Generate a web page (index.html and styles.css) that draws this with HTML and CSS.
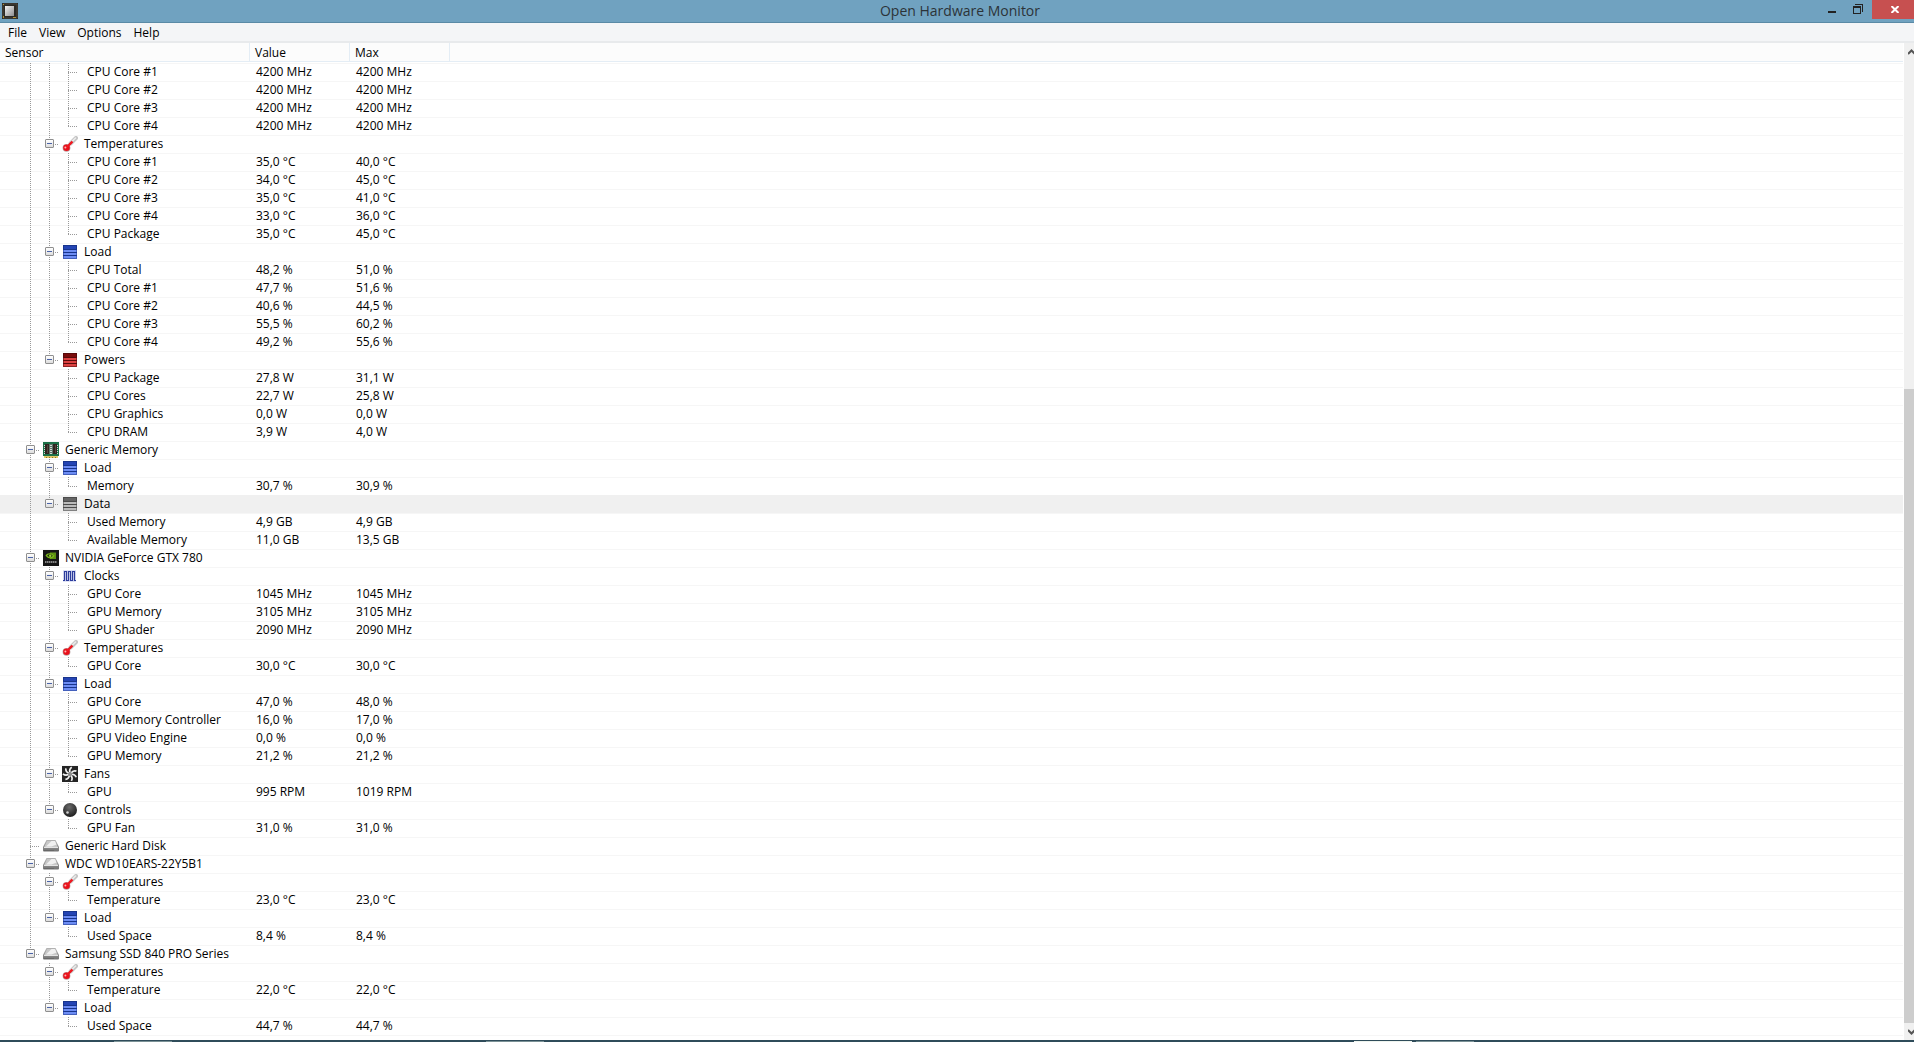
FILE: index.html
```html
<!DOCTYPE html>
<html lang="en">
<head>
    <meta charset="UTF-8">
    <meta name="viewport" content="width=device-width, initial-scale=1.0">
    <title>Open Hardware Monitor</title>
    <link rel="stylesheet" href="styles.css">
</head>
<body>
    <svg class="sprites" aria-hidden="true">
        <defs>
            <linearGradient id="metal" x1="0" y1="0" x2="0" y2="1">
                <stop offset="0" stop-color="#b4b4b4"/>
                <stop offset="1" stop-color="#727272"/>
            </linearGradient>
            <linearGradient id="chip" x1="0" y1="0" x2="1" y2="1">
                <stop offset="0" stop-color="#f4f4f4"/>
                <stop offset="1" stop-color="#8e8e8e"/>
            </linearGradient>
            <radialGradient id="ball" cx="0.45" cy="0.3" r="0.7">
                <stop offset="0" stop-color="#6a6a6a"/>
                <stop offset="1" stop-color="#1c1c1c"/>
            </radialGradient>
        </defs>
        <symbol id="icon-temperature" viewBox="0 0 16 16">
            <path d="M8.5 7.5L14 2" stroke="#c4c4c4" stroke-width="4" stroke-linecap="round"/>
            <path d="M9 6.5L13.5 2" stroke="#ececec" stroke-width="1.5" stroke-linecap="round"/>
            <path d="M4.5 11.5L10.5 5.5" stroke="#e8141c" stroke-width="2"/>
            <circle cx="4.5" cy="11.8" r="3.9" fill="#b9a0a0"/>
            <circle cx="4.5" cy="11.8" r="3.3" fill="#e8101a"/>
            <path d="M5 11L10 6" stroke="#f01820" stroke-width="2"/>
            <circle cx="3.4" cy="11.6" r="1" fill="#ffb4b4"/>
        </symbol>
        <symbol id="icon-load" viewBox="0 0 16 16">
            <g shape-rendering="crispEdges">
                <rect x="1" y="1" width="14" height="14" fill="#18348c"/>
                <rect x="2" y="2" width="12" height="3" fill="#2444b4"/>
                <path d="M1 6h14v2H1zM1 9h14v2H1zM1 12h14v3H1z" fill="#4460bc"/>
                <path d="M2 6h12v2H2zM2 9h12v2H2zM2 12h12v2H2z" fill="#6c8cf4"/>
            </g>
        </symbol>
        <symbol id="icon-power" viewBox="0 0 16 16">
            <g shape-rendering="crispEdges">
                <rect x="1" y="1" width="14" height="14" fill="#580a0a"/>
                <rect x="2" y="2" width="12" height="3" fill="#7a0c0c"/>
                <path d="M1 6h14v2H1zM1 9h14v2H1zM1 12h14v3H1z" fill="#902424"/>
                <path d="M2 6h12v2H2zM2 9h12v2H2zM2 12h12v2H2z" fill="#dc4040"/>
            </g>
        </symbol>
        <symbol id="icon-data" viewBox="0 0 16 16">
            <g shape-rendering="crispEdges">
                <rect x="1" y="1" width="14" height="14" fill="#4c4c4c"/>
                <rect x="2" y="2" width="12" height="3" fill="#646464"/>
                <path d="M1 6h14v2H1zM1 9h14v2H1zM1 12h14v3H1z" fill="#808080"/>
                <path d="M2 6h12v2H2zM2 9h12v2H2zM2 12h12v2H2z" fill="#bcbcbc"/>
            </g>
        </symbol>
        <symbol id="icon-clock" viewBox="0 0 16 16">
            <rect x="1" y="2" width="13" height="12" fill="#dfe3f6"/>
            <path d="M1 12.5h1.500v-9h2v9h2v-9h2v9h2v-9h2v9H14" fill="none" stroke="#2c3c9c" stroke-width="1.200"/>
        </symbol>
        <symbol id="icon-memory" viewBox="0 0 16 16">
            <g shape-rendering="crispEdges">
                <rect width="16" height="14" fill="#1c7048"/>
                <rect x="1" y="14" width="14" height="2" fill="#e0c868"/>
                <path d="M3 15h1v1H3zM6 15h1v1H6zM9 15h1v1H9zM12 15h1v1h-1z" fill="#8c7428"/>
                <rect x="2" y="2" width="4" height="10" fill="#302420"/>
                <rect x="10" y="2" width="4" height="10" fill="#302420"/>
                <path d="M6 2h4v10H6z" fill="#5c7468"/>
                <path d="M7 3h2v1H7zM7 5h2v1H7zM7 7h2v1H7zM7 9h2v1H7zM7 11h2v1H7zM1 3h1v1H1zM1 5h1v1H1zM1 7h1v1H1zM1 9h1v1H1zM1 11h1v1H1zM14 3h1v1h-1zM14 5h1v1h-1zM14 7h1v1h-1zM14 9h1v1h-1zM14 11h1v1h-1z" fill="#d0d8d4"/>
                <path d="M4 3h1v8H4zM12 3h1v8h-1z" fill="#54443c"/>
            </g>
        </symbol>
        <symbol id="icon-nvidia" viewBox="0 0 16 16">
            <rect width="16" height="16" fill="#161616"/>
            <path d="M7 2.500h6v6.500H7z" fill="#5c9010"/>
            <path d="M2.500 5.500C4.500 2.500 8.500 2.500 11.500 5.800C9.500 9.300 5 9.300 2.500 5.500z" fill="#7cb81c"/>
            <path d="M4.200 5.600C5.800 3.800 8 4 9.800 5.800C8.200 7.600 5.800 7.600 4.200 5.600z" fill="#1c2c08"/>
            <circle cx="7.200" cy="5.700" r="1.200" fill="#9cd03c"/>
            <path d="M2 12h12" stroke="#a8a8a8" stroke-width="1.500" stroke-dasharray="1.500 0.500"/>
        </symbol>
        <symbol id="icon-fan" viewBox="0 0 16 16">
            <rect width="16" height="16" fill="#242424"/>
            <g fill="none" stroke="#f0f0f0" stroke-width="1.700">
                <path id="blade" d="M8 6.500C7.300 4.500 7.800 2.500 9.800 1.200"/>
                <use href="#blade" transform="rotate(51 8 8)"/>
                <use href="#blade" transform="rotate(103 8 8)"/>
                <use href="#blade" transform="rotate(154 8 8)"/>
                <use href="#blade" transform="rotate(206 8 8)"/>
                <use href="#blade" transform="rotate(257 8 8)"/>
                <use href="#blade" transform="rotate(309 8 8)"/>
            </g>
            <circle cx="8" cy="8" r="2" fill="#909090"/>
        </symbol>
        <symbol id="icon-control" viewBox="0 0 16 16">
            <circle cx="8" cy="8" r="7" fill="url(#ball)"/>
            <circle cx="5.500" cy="10.500" r="1.300" fill="#d0d0d0"/>
        </symbol>
        <symbol id="icon-disk" viewBox="0 0 16 16">
            <path d="M3.500 2h9L16 9v3.500q0 1-1 1H1q-1 0-1-1V9z" fill="url(#metal)"/>
            <path d="M4 3h8l2.800 6H1.200z" fill="#c8c8c8"/>
            <path d="M3 8.500L8.500 3H12l1.500 3.500L8.500 8.500z" fill="#f0f0f0"/>
            <path d="M1 9.500h14" stroke="#e4e4e4"/>
            <path d="M1 12.500h10" stroke="#686868"/>
        </symbol>
    </svg>

    <header class="titlebar">
        <svg class="app-icon" viewBox="0 0 16 16" aria-hidden="true">
            <rect width="16" height="16" fill="#2c2a24"/>
            <path d="M1 1h14v14H1z" fill="none" stroke="#48453c"/>
            <rect x="3" y="3" width="9" height="10" fill="url(#chip)"/>
            <path d="M1 13h1v2H1zM11 14h3v1h-3zM1 1h1v1H1z" fill="#b89430"/>
        </svg>
        <h1 class="title">Open Hardware Monitor</h1>
        <div class="window-buttons">
            <button class="window-button" aria-label="Minimize">
                <svg width="8" height="10" viewBox="0 0 8 10"><path d="M0 7h8v2H0z" fill="#222"/></svg>
            </button>
            <button class="window-button" aria-label="Restore">
                <svg width="10" height="10" viewBox="0 0 10 10"><path d="M0 2h8v8H0zM1 4v5h6V4zM2 0h8v8H9V1H2z" fill="#222" fill-rule="evenodd"/></svg>
            </button>
            <button class="window-button close" aria-label="Close">
                <svg width="8" height="7" viewBox="0 0 8 7"><path d="M0.500 0L7.500 7M7.500 0L0.500 7" stroke="#fff" stroke-width="2"/></svg>
            </button>
        </div>
    </header>

    <nav class="menubar">
        <button class="menu-item">File</button>
        <button class="menu-item">View</button>
        <button class="menu-item">Options</button>
        <button class="menu-item">Help</button>
    </nav>

    <main class="content">
        <div class="tree">
            <table class="sensors">
                <colgroup>
                    <col class="col-sensor">
                    <col class="col-value">
                    <col class="col-value">
                    <col>
                </colgroup>
                <thead>
                    <tr><th>Sensor</th><th>Value</th><th>Max</th><th></th></tr>
                </thead>
                <tbody id="rows"></tbody>
            </table>
        </div>
        <div class="scrollbar">
            <button class="scroll-button" aria-label="Scroll up">
                <svg width="6" height="6" viewBox="0 0 6 6"><path d="M0 5L3.500 1.500L7 5" fill="none" stroke="#555" stroke-width="2"/></svg>
            </button>
            <div class="track"><div class="thumb"></div></div>
            <button class="scroll-button" aria-label="Scroll down">
                <svg width="6" height="6" viewBox="0 0 6 6"><path d="M0 1L3.500 4.500L7 1" fill="none" stroke="#555" stroke-width="2"/></svg>
            </button>
        </div>
    </main>

    <footer class="taskbar">
        <span class="task first"></span>
        <span class="task second"></span>
        <span class="task third active"></span>
        <span class="task fourth"></span>
    </footer>

    <script src="script.js"></script>
</body>
</html>
```

FILE: styles.css
```css
* {
    margin: 0;
    padding: 0;
    box-sizing: border-box;
}

body {
    font-family: "Open Sans", "Noto Sans", sans-serif;
    font-size: 12px;
    line-height: 18px;
    height: 100vh;
    display: flex;
    flex-direction: column;
    background-color: #fff;
    color: #000;
    overflow: hidden;
}

button {
    font: inherit;
    color: inherit;
    border: none;
    background: none;
}

svg {
    display: block;
}

.sprites {
    position: absolute;
    width: 0;
    height: 0;
}

.titlebar {
    display: grid;
    grid-template-columns: 1fr auto 1fr;
    height: 23px;
    background-color: #70a2c0;
    border-bottom: 1px solid #5a8aa6;
}

.app-icon {
    width: 16px;
    height: 16px;
    margin: 3px 2px;
}

.title {
    padding-left: 6px;
    font-size: 14px;
    font-weight: normal;
    line-height: 22px;
    color: #2c3338;
}

.window-buttons {
    display: flex;
    justify-content: flex-end;
}

.window-button {
    display: flex;
    justify-content: center;
    width: 26px;
    height: 19px;
    padding-top: 4px;
}

.window-button.close {
    width: 42px;
    margin-left: 1px;
    padding-top: 6px;
    padding-left: 4px;
    background-color: #c75050;
}

.menubar {
    display: flex;
    height: 20px;
    padding-left: 2px;
    background-color: #f4f5f7;
    border-bottom: 2px solid #e8eaec;
}

.menu-item {
    padding: 1px 6px 0;
    line-height: 17px;
}

.content {
    flex: 1;
    display: flex;
    min-height: 0;
}

.tree {
    flex: 1;
    overflow: hidden;
    padding-right: 1px;
}

.sensors {
    width: 100%;
    table-layout: fixed;
    border-spacing: 0;
    border-bottom: 1px solid #f6f6f6;
}

.col-sensor {
    width: 250px;
}

.col-value {
    width: 100px;
}

th {
    height: 19px;
    padding-top: 1px;
    padding-left: 5px;
    line-height: 17px;
    font-weight: normal;
    text-align: left;
    background-color: #fcfcfc;
    border-right: 1px solid #e4edf5;
    border-bottom: 1px solid #e4edf5;
}

th:last-child {
    border-right: none;
}

tbody::before {
    content: "";
    display: table-row;
    height: 1px;
}

td {
    height: 18px;
    padding-left: 6px;
    white-space: nowrap;
    background: linear-gradient(#f6f6f6, #f6f6f6) top / 100% 1px no-repeat;
}

td:first-child {
    padding-left: 21px;
}

.selected td {
    background: #f0f0f0;
}

.node {
    display: flex;
    height: 18px;
}

.icon {
    width: 16px;
    height: 16px;
    margin: 1px 6px 0 3px;
}

.sensor-name {
    padding-left: 9px;
}

/* dotted tree lines, one 19px cell per level */
.guide {
    width: 19px;
    height: 18px;
    background-repeat: no-repeat;
    background-position: 9px 0, 9px 9px;
}

.rail {
    background-image: repeating-linear-gradient(#999 0 1px, transparent 1px 2px);
    background-size: 1px 18px;
}

.tee,
.corner {
    background-image: repeating-linear-gradient(#999 0 1px, transparent 1px 2px), repeating-linear-gradient(90deg, #999 0 1px, transparent 1px 2px);
    background-size: 1px 18px, 11px 1px;
}

.corner {
    background-size: 1px 10px, 11px 1px;
}

.toggle {
    display: block;
    width: 9px;
    height: 9px;
    margin: 4px 5px;
    border: 1px solid #8f8f8f;
    border-radius: 1px;
    background: linear-gradient(#4b63a7, #4b63a7) center / 5px 1px no-repeat, linear-gradient(#fff, #ddd);
}

.scrollbar {
    display: flex;
    flex-direction: column;
    width: 10px;
    background-color: #f0f0f0;
}

.scroll-button {
    display: flex;
    align-items: center;
    justify-content: flex-end;
    height: 17px;
}

.track {
    flex: 1;
    display: flex;
    flex-direction: column;
    justify-content: flex-end;
}

.thumb {
    height: 65.8%;
    background-color: #cdcdcd;
}

.taskbar {
    display: flex;
    height: 2px;
    padding-top: 1px;
    background-color: #2f4c5a;
}

.task {
    width: 58px;
    background-color: #7b9296;
}

.task.active {
    background-color: #eef4ee;
}

.first {
    margin-left: 114px;
}

.second {
    margin-left: 314px;
}

.third {
    margin-left: 810px;
}

.fourth {
    margin-left: 4px;
}
```

FILE: script.js
```js
// The list is scrolled: the first hardware and its first group have no header row.
const hardware = [
    { groups: [
        { sensors: [
            ['CPU Core #1', '4200 MHz', '4200 MHz'],
            ['CPU Core #2', '4200 MHz', '4200 MHz'],
            ['CPU Core #3', '4200 MHz', '4200 MHz'],
            ['CPU Core #4', '4200 MHz', '4200 MHz']
        ] },
        { name: 'Temperatures', icon: 'temperature', sensors: [
            ['CPU Core #1', '35,0 °C', '40,0 °C'],
            ['CPU Core #2', '34,0 °C', '45,0 °C'],
            ['CPU Core #3', '35,0 °C', '41,0 °C'],
            ['CPU Core #4', '33,0 °C', '36,0 °C'],
            ['CPU Package', '35,0 °C', '45,0 °C']
        ] },
        { name: 'Load', icon: 'load', sensors: [
            ['CPU Total', '48,2 %', '51,0 %'],
            ['CPU Core #1', '47,7 %', '51,6 %'],
            ['CPU Core #2', '40,6 %', '44,5 %'],
            ['CPU Core #3', '55,5 %', '60,2 %'],
            ['CPU Core #4', '49,2 %', '55,6 %']
        ] },
        { name: 'Powers', icon: 'power', sensors: [
            ['CPU Package', '27,8 W', '31,1 W'],
            ['CPU Cores', '22,7 W', '25,8 W'],
            ['CPU Graphics', '0,0 W', '0,0 W'],
            ['CPU DRAM', '3,9 W', '4,0 W']
        ] }
    ] },
    { name: 'Generic Memory', icon: 'memory', groups: [
        { name: 'Load', icon: 'load', sensors: [
            ['Memory', '30,7 %', '30,9 %']
        ] },
        { name: 'Data', icon: 'data', selected: true, sensors: [
            ['Used Memory', '4,9 GB', '4,9 GB'],
            ['Available Memory', '11,0 GB', '13,5 GB']
        ] }
    ] },
    { name: 'NVIDIA GeForce GTX 780', icon: 'nvidia', groups: [
        { name: 'Clocks', icon: 'clock', sensors: [
            ['GPU Core', '1045 MHz', '1045 MHz'],
            ['GPU Memory', '3105 MHz', '3105 MHz'],
            ['GPU Shader', '2090 MHz', '2090 MHz']
        ] },
        { name: 'Temperatures', icon: 'temperature', sensors: [
            ['GPU Core', '30,0 °C', '30,0 °C']
        ] },
        { name: 'Load', icon: 'load', sensors: [
            ['GPU Core', '47,0 %', '48,0 %'],
            ['GPU Memory Controller', '16,0 %', '17,0 %'],
            ['GPU Video Engine', '0,0 %', '0,0 %'],
            ['GPU Memory', '21,2 %', '21,2 %']
        ] },
        { name: 'Fans', icon: 'fan', sensors: [
            ['GPU', '995 RPM', '1019 RPM']
        ] },
        { name: 'Controls', icon: 'control', sensors: [
            ['GPU Fan', '31,0 %', '31,0 %']
        ] }
    ] },
    { name: 'Generic Hard Disk', icon: 'disk', groups: [] },
    { name: 'WDC WD10EARS-22Y5B1', icon: 'disk', groups: [
        { name: 'Temperatures', icon: 'temperature', sensors: [
            ['Temperature', '23,0 °C', '23,0 °C']
        ] },
        { name: 'Load', icon: 'load', sensors: [
            ['Used Space', '8,4 %', '8,4 %']
        ] }
    ] },
    { name: 'Samsung SSD 840 PRO Series', icon: 'disk', groups: [
        { name: 'Temperatures', icon: 'temperature', sensors: [
            ['Temperature', '22,0 °C', '22,0 °C']
        ] },
        { name: 'Load', icon: 'load', sensors: [
            ['Used Space', '44,7 %', '44,7 %']
        ] }
    ] }
];

const tbody = document.getElementById('rows');

function guide(type, toggle) {
    return `<span class="guide ${type}">${toggle || ''}</span>`;
}

function addRow(label, value, max, selected) {
    const row = document.createElement('tr');
    if (selected) row.className = 'selected';
    row.innerHTML = `<td><div class="node">${label}</div></td><td>${value}</td><td>${max}</td><td></td>`;
    tbody.appendChild(row);
}

function toggleButton(item) {
    return `<button class="toggle" aria-label="Collapse ${item.name}"></button>`;
}

function iconLabel(item) {
    return `<svg class="icon" aria-hidden="true"><use href="#icon-${item.icon}"/></svg><span>${item.name}</span>`;
}

hardware.forEach((hw, h) => {
    const lastHw = h === hardware.length - 1;
    if (hw.name) {
        addRow(guide(lastHw ? 'corner' : 'tee', hw.groups.length ? toggleButton(hw) : '') + iconLabel(hw), '', '');
    }

    hw.groups.forEach((group, g) => {
        const lastGroup = g === hw.groups.length - 1;
        const outer = guide(lastHw ? '' : 'rail');
        if (group.name) {
            addRow(outer + guide(lastGroup ? 'corner' : 'tee', toggleButton(group)) + iconLabel(group), '', '', group.selected);
        }

        group.sensors.forEach(([name, value, max], s) => {
            const lastSensor = s === group.sensors.length - 1;
            addRow(outer + guide(lastGroup ? '' : 'rail') + guide(lastSensor ? 'corner' : 'tee') +
                `<span class="sensor-name">${name}</span>`, value, max);
        });
    });
});
```
